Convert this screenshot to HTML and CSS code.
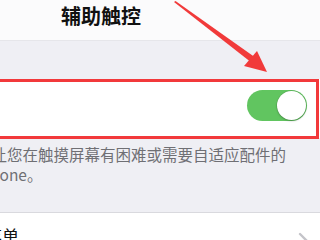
FILE: index.html
```html
<!DOCTYPE html>
<html lang="zh-CN">
<head>
<meta charset="utf-8">
<link rel="stylesheet" href="styles.css">
</head>
<body>
<div class="screen">
  <header class="nav"><h1 class="title">辅助触控</h1></header>
  <div class="gap"></div>
  <div class="row toggle-row">
    <span class="switch"><span class="knob"></span></span>
  </div>
  <p class="footer">可让您在触摸屏幕有困难或需要自适应配件的<br>iPhone。</p>
  <div class="row menu-row">
    <span class="label">菜单</span>
    <svg class="chevron" width="12" height="20" viewBox="0 0 12 20"><path d="M2 2 L10 10 L2 18" fill="none" stroke="#c4c4c9" stroke-width="2.4" stroke-linecap="round" stroke-linejoin="round"/></svg>
  </div>
  <div class="annot-box"></div>
  <svg class="arrow" width="320" height="240" viewBox="0 0 320 240">
    <polygon points="174,2 175.5,1 256,58 252,63" fill="#f13a3a"/>
    <polygon points="267,72 244,66 257,51" fill="#f13a3a"/>
  </svg>
</div>
</body>
</html>
```

FILE: styles.css
```css
* { box-sizing: border-box; }
html, body { margin: 0; padding: 0; }
body {
  font-family: "Noto Sans CJK SC", "Noto Sans", sans-serif;
  background: #efeff4;
}
.screen {
  position: relative;
  width: 320px;
  height: 240px;
  overflow: hidden;
  background: #efeff4;
}
.nav {
  height: 41px;
  background: #fbfbfc;
  border-bottom: 1px solid #e6e6ea;
  display: flex;
  align-items: center;
  padding-left: 61px;
}
.title {
  margin: 0;
  font-size: 20px;
  font-weight: 600;
  color: #111;
  line-height: 24px;
  padding-bottom: 9px;
}
.gap { height: 38px; }
.row {
  background: #fff;
  display: flex;
}
.toggle-row {
  height: 59px;
  justify-content: flex-end;
  align-items: flex-start;
  padding-top: 11px;
  padding-right: 13px;
}
.switch {
  width: 60px;
  height: 31px;
  border-radius: 16px;
  background: #61c560;
  display: flex;
  justify-content: flex-end;
  align-items: center;
  padding-right: 1px;
}
.knob {
  width: 29px;
  height: 29px;
  border-radius: 50%;
  background: #fff;
  box-shadow: 0 1px 2px rgba(0,0,0,0.25), 0 0 0 0.5px rgba(0,0,0,0.12);
}
.footer {
  margin: 0 0 0 -24px;
  padding: 7px 0 0 0;
  height: 74px;
  font-size: 15.5px;
  line-height: 19.5px;
  color: #6f6f74;
  white-space: nowrap;
}
.menu-row {
  border-top: 1px solid #d9d9de;
  height: 60px;
  align-items: flex-start;
  justify-content: space-between;
  padding-top: 12px;
  padding-right: 10px;
  margin-left: -15px;
}
.label {
  font-size: 17px;
  line-height: 22px;
  color: #111;
}
.chevron {
  margin-top: 7px;
}
.annot-box {
  position: absolute;
  left: -10px;
  right: 1px;
  top: 79px;
  height: 60px;
  border: 3px solid #f2393b;
}
.arrow {
  position: absolute;
  left: 0;
  top: 0;
}
```
